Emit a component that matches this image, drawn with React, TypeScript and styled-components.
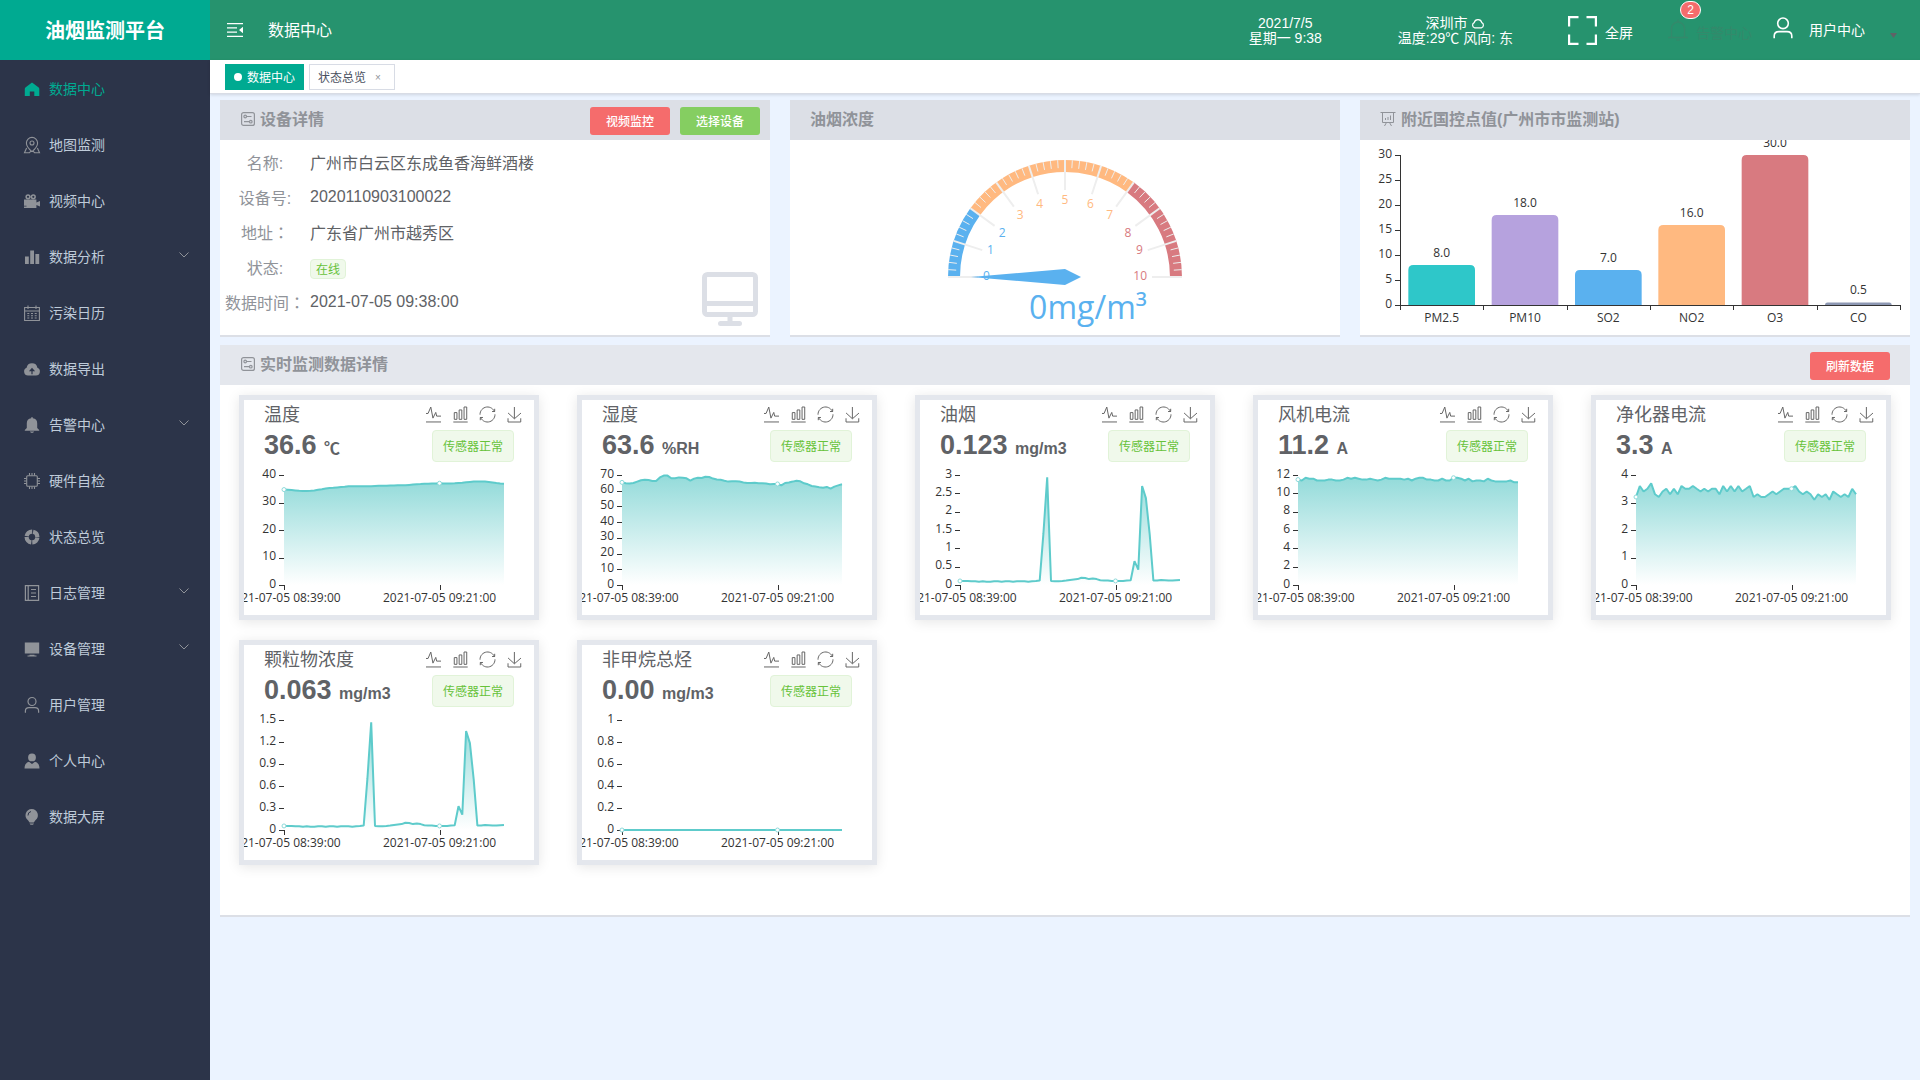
import React, { useId, useLayoutEffect, useRef, useState } from "react";
import styled, { createGlobalStyle } from "styled-components";

const GlobalStyle = createGlobalStyle`
  *, *::before, *::after { box-sizing: border-box; }
  body {
    margin: 0;
    background: #ebf3ff;
    color: #606266;
    font-family: "Liberation Sans", "Noto Sans CJK SC", sans-serif;
    font-size: 14px;
  }
  button { font-family: inherit; cursor: pointer; }
  a { color: inherit; text-decoration: none; }
  h1, h2, h3, p, dl, dd, ul { margin: 0; padding: 0; }
  ul { list-style: none; }
`;

const teal = "#00aa91";
const chartFont = '"Open Sans", "Noto Sans CJK SC", sans-serif';

/* ---------- layout ---------- */

const Shell = styled.div`
  display: flex;
  min-height: 100vh;
`;

const Sidebar = styled.aside`
  flex: 0 0 210px;
  background: #2c3449;
`;

const Brand = styled.h1`
  height: 60px;
  margin-bottom: 1px;
  padding-bottom: 1px;
  display: flex;
  align-items: center;
  justify-content: center;
  background: ${teal};
  color: #fff;
  font-size: 20px;
`;

const MenuLink = styled.a<{ $active?: boolean }>`
  height: 56px;
  padding: 0 20px;
  display: flex;
  align-items: center;
  color: ${(p) => (p.$active ? teal : "#bfcbd9")};

  > span { padding-bottom: 2px; }
  > svg:first-child {
    margin: 0 8px 0 3px;
    color: ${(p) => (p.$active ? teal : "#909399")};
  }
  > svg:last-child {
    margin: 0 1px 4px auto;
    color: #909399;
  }
`;

const Main = styled.div`
  flex: 1;
  min-width: 0;
`;

const TopBar = styled.header`
  height: 60px;
  padding: 0 23px 0 17px;
  display: flex;
  align-items: center;
  background: #26936e;
  color: #fff;
`;

const PlainButton = styled.button`
  padding: 0;
  border: 0;
  display: flex;
  align-items: center;
  background: none;
  color: inherit;
  font-size: 14px;
`;

const PageName = styled.span`
  margin: 0 auto 0 25px;
  padding-bottom: 2px;
  font-size: 16px;
`;

const Info = styled.div<{ $gap: number }>`
  margin-right: ${(p) => p.$gap}px;
  padding-top: 2px;
  line-height: 15px;
  text-align: center;
  white-space: nowrap;

  svg { vertical-align: -2px; }
`;

const FullscreenButton = styled(PlainButton)`
  margin-right: 35px;
  gap: 8px;

  span { padding-top: 4px; }
`;

const AlarmButton = styled(PlainButton)`
  position: relative;
  margin-right: 19px;
  gap: 8px;
  color: #34896b;

  > span { padding-top: 4px; }
`;

const Badge = styled.sup`
  position: absolute;
  left: 12px;
  top: -17px;
  min-width: 21px;
  height: 18px;
  border: 1px solid #fff;
  border-radius: 10px;
  background: #f56c6c;
  color: #fff;
  font-size: 12px;
  line-height: 17px;
  text-align: center;
`;

const UserButton = styled(PlainButton)`
  gap: 14px;

  > span { padding-bottom: 2px; }
  svg:first-child { margin-bottom: 4px; }
  svg:last-child { margin: 11px 0 0 11px; }
`;

const TabBar = styled.nav`
  height: 34px;
  padding: 4px 15px;
  display: flex;
  gap: 5px;
  background: #fff;
  border-bottom: 1px solid #d8dce5;
  box-shadow: 0 1px 3px rgba(0, 0, 0, 0.12);
`;

const Tab = styled.div<{ $active?: boolean }>`
  height: 26px;
  padding: 0 8px;
  display: flex;
  align-items: center;
  border: 1px solid ${(p) => (p.$active ? teal : "#d8dce5")};
  background: ${(p) => (p.$active ? teal : "#fff")};
  color: ${(p) => (p.$active ? "#fff" : "#495060")};
  font-size: 12px;

  a { padding-bottom: 1px; }
`;

const TabDot = styled.i`
  width: 8px;
  height: 8px;
  margin-right: 5px;
  border-radius: 50%;
  background: #fff;
`;

const TabClose = styled.button`
  width: 16px;
  margin-left: 4px;
  padding: 0;
  border: 0;
  background: none;
  color: #909399;
  font-size: 10px;
`;

const Content = styled.main`
  padding: 6px 10px;
  display: grid;
  gap: 8px;
`;

const TopRow = styled.div`
  display: grid;
  grid-template-columns: repeat(3, minmax(0, 1fr));
  gap: 20px;
`;

const Panel = styled.section`
  background: #fff;
  border-bottom: 2px solid #dcdfe6;
`;

const PanelHead = styled.header<{ $light?: boolean; $end?: number }>`
  height: 40px;
  padding: 0 ${(p) => p.$end ?? 20}px 0 20px;
  display: flex;
  align-items: center;
  gap: 10px;
  background: ${(p) => (p.$light ? "#e4e7ed" : "#dcdfe6")};
`;

const PanelTitle = styled.h2`
  margin-right: auto;
  padding-bottom: 5px;
  display: flex;
  align-items: center;
  gap: 4px;
  color: #909399;
  font-size: 16px;

  svg { margin-top: 2px; }
`;

const SmallButton = styled.button<{ $tone: "danger" | "success" }>`
  width: 80px;
  height: 28px;
  margin-top: 2px;
  padding: 0 0 2px;
  border: 0;
  border-radius: 3px;
  background: ${(p) => (p.$tone === "danger" ? "#f56c6c" : "#85ce61")};
  color: #fff;
  font-size: 12px;
  font-weight: 500;
`;

const PanelBody = styled.div`
  height: 195px;
`;

const DeviceBody = styled(PanelBody)`
  display: flex;
  align-items: flex-end;
  justify-content: space-between;
  padding: 0 12px 8px 5px;
`;

const DeviceList = styled.dl`
  align-self: flex-start;
  padding-top: 4px;
  display: grid;
  grid-template-columns: 80px auto;
  column-gap: 5px;
  grid-auto-rows: 35px;
  align-items: center;
  font-size: 16px;
  white-space: nowrap;

  dt {
    color: #909399;
    text-align: center;
  }
`;

const WideColon = styled.span`
  font-family: "Noto Sans CJK TC", sans-serif;
  line-height: 1;
`;

const Tag = styled.span<{ $large?: boolean }>`
  height: ${(p) => (p.$large ? 32 : 20)}px;
  padding: 0 ${(p) => (p.$large ? 10 : 5)}px 2px;
  display: inline-flex;
  align-items: center;
  vertical-align: -6px;
  border: 1px solid #e1f3d8;
  border-radius: 4px;
  background: #f0f9eb;
  color: #67c23a;
  font-size: 12px;
  white-space: nowrap;
`;

const GaugeBody = styled(PanelBody)`
  display: flex;
  justify-content: center;
`;

const SensorGrid = styled.div`
  padding: 10px 19px 50px;
  display: grid;
  grid-template-columns: repeat(5, minmax(0, 1fr));
  gap: 20px 38px;
`;

const SensorCard = styled.article`
  border: 5px solid #e4e7ed;
  background: #fff;
  box-shadow: 0 2px 12px rgba(0, 0, 0, 0.1);
  overflow: hidden;
`;

const SensorHead = styled.div`
  height: 30px;
  padding: 0 12px 4px 20px;
  display: flex;
  align-items: center;
  justify-content: space-between;

  h3 {
    font-size: 18px;
    font-weight: 400;
    white-space: nowrap;
  }
`;

const Tools = styled.div`
  padding-top: 2px;
  display: flex;
  gap: 12px;
  color: #666;
`;

const SensorValue = styled.div`
  height: 32px;
  padding: 0 20px;
  display: flex;
  align-items: center;
  justify-content: space-between;
`;

const Reading = styled.p`
  padding-top: 2px;
  font-size: 27px;
  font-weight: 700;
  line-height: 32px;
  white-space: nowrap;

  small { font-size: 16px; }
`;

const ChartBox = styled.div<{ $height: number }>`
  height: ${(p) => p.$height}px;
  overflow: hidden;

  svg { display: block; }
`;

const ChartText = styled.text`
  font-family: ${chartFont};
  font-size: 12px;
  fill: #333;
  dominant-baseline: central;
`;

const GaugeValue = styled(ChartText)`
  font-size: 32px;
  fill: #5ab1ef;
  text-anchor: middle;
`;

/* ---------- icons ---------- */

const iconShapes: Record<string, React.ReactNode> = {
  home: <path fill="currentColor" d="M9 2.4 15.7 7.4Q16.3 8 16.3 8.8V16H11.3V11.6H6.8V16H1.8V8.8Q1.8 8 2.4 7.4Z" />,
  map: (
    <g fill="none" stroke="currentColor" strokeWidth="1.1">
      <path d="M9 15.6Q3.4 11 3.4 7A5.6 5.6 0 0 1 14.6 7Q14.6 11 9 15.6ZM3.6 12 1.5 16.7H6.5L8 15M14.4 12 16.5 16.7H11.5L10 15" />
      <circle cx="9" cy="7" r="2" />
    </g>
  ),
  camera: (
    <g fill="currentColor">
      <path fillRule="evenodd" d="M5 2.2A2.6 2.6 0 1 1 5 7.4 2.6 2.6 0 0 1 5 2.2ZM5 3.7A1.1 1.1 0 1 0 5 5.9 1.1 1.1 0 0 0 5 3.7ZM10.3 2.2A2.6 2.6 0 1 1 10.3 7.4 2.6 2.6 0 0 1 10.3 2.2ZM10.3 3.7A1.1 1.1 0 1 0 10.3 5.9 1.1 1.1 0 0 0 10.3 3.7Z" />
      <path d="M1 7.5H13.4V10.5L17 9V14.5L13.4 13V16H1V14.5H3.5V13.8H1Z" />
    </g>
  ),
  data: <path fill="currentColor" d="M2 8.5H5.8V16H2ZM7.2 2.5H11V16H7.2ZM12.4 6H16.2V16H12.4Z" />,
  date: (
    <g fill="none" stroke="currentColor" strokeWidth="1.1">
      <path d="M1.6 3.5H16.4V16.5H1.6ZM1.6 7H16.4M5 1.5V5M13 1.5V5" />
      <path strokeDasharray="2 1.7" d="M4.3 9.5H14M4.3 11.7H14M4.3 14H14" />
    </g>
  ),
  upload: (
    <path
      fill="currentColor"
      fillRule="evenodd"
      d="M5 15.5A4 4 0 0 1 3.6 7.8 5.5 5.5 0 0 1 14.4 7.8 4 4 0 0 1 13 15.5ZM9 7.8 5.9 11.3H8.4V14.2H9.6V11.3H12.1Z"
    />
  ),
  bell: (
    <path
      fill="currentColor"
      d="M8.2 1.2H9.8V2.2A5.2 5.2 0 0 1 14.2 7.3V12L16.2 14V14.8H1.8V14L3.8 12V7.3A5.2 5.2 0 0 1 8.2 2.2ZM6.8 15.6H11.2Q10.6 17 9 17 7.4 17 6.8 15.6Z"
    />
  ),
  cpu: (
    <g fill="none" stroke="currentColor" strokeWidth="1.1">
      <rect x="3.7" y="3.7" width="10.6" height="10.6" rx="1" />
      <path d="M6.5 3.5V1M9 3.5V1M11.5 3.5V1M6.5 17V14.5M9 17V14.5M11.5 17V14.5M1 6.5H3.5M1 9H3.5M1 11.5H3.5M14.5 6.5H17M14.5 9H17M14.5 11.5H17" />
    </g>
  ),
  help: (
    <circle cx="9" cy="9" r="5.4" fill="none" stroke="currentColor" strokeWidth="4.2" strokeDasharray="7.48 1" strokeDashoffset="-0.5" />
  ),
  notebook: (
    <path fill="none" stroke="currentColor" strokeWidth="1.2" d="M2.4 1.6H15.6V16.4H2.4ZM5.2 1.6V16.4M8 5.5H13M8 9H13M8 12.5H13" />
  ),
  platform: <path fill="currentColor" d="M1.8 2.5H16.2V13.5H1.8ZM6.5 14.7H11.5V15.4H13.5V16.4H4.5V15.4H6.5Z" />,
  user: (
    <g fill="none" stroke="currentColor" strokeWidth="1.2">
      <circle cx="9" cy="5.5" r="4" />
      <path d="M2.4 16.7V15Q2.4 11.7 6 11.7H12Q15.6 11.7 15.6 15V16.7" />
    </g>
  ),
  person: (
    <path fill="currentColor" d="M9 1.5A3.9 3.9 0 1 1 9 9.3 3.9 3.9 0 0 1 9 1.5ZM6 9.8 9 12 12 9.8Q16.5 11 16.5 16.5H1.5Q1.5 11 6 9.8Z" />
  ),
  bulb: (
    <g>
      <path fill="currentColor" d="M8.7 1A6.3 6.3 0 0 1 12.4 12.3L10.8 14.5H6.6L5 12.3A6.3 6.3 0 0 1 8.7 1ZM6.5 15.5H11L10 16.8H7.5Z" />
      <path d="M5 7.5A3.9 3.9 0 0 1 8 3.5" fill="none" stroke="#2c3449" />
    </g>
  ),
};

const Icon = ({ name, size = 18 }: { name: string; size?: number }) => (
  <svg width={size} height={size} viewBox="0 0 18 18" aria-hidden="true">
    {iconShapes[name]}
  </svg>
);

const Chevron = () => (
  <svg width="10" height="6" viewBox="0 0 10 6" fill="none" stroke="currentColor" aria-hidden="true">
    <path d="M.5.5 5 5 9.5.5" />
  </svg>
);

const FoldIcon = () => (
  <svg width="16" height="16" viewBox="0 0 16 16" fill="currentColor" aria-hidden="true">
    <path d="M0 1H16V2.3H0ZM0 5.3H10V6.6H0ZM0 9.5H10V10.8H0ZM0 13.7H16V15H0ZM16 4.8V11.2L12 8Z" />
  </svg>
);

const CloudIcon = () => (
  <svg width="14" height="13" viewBox="0 0 14 13" fill="none" stroke="currentColor" strokeWidth="1.2" aria-hidden="true">
    <path d="M3.5 10.8A2.8 2.8 0 0 1 3.2 5.6 3.9 3.9 0 0 1 10.8 5.6 2.8 2.8 0 0 1 10.5 10.8Z" />
  </svg>
);

const FullscreenIcon = () => (
  <svg width="29" height="29" viewBox="0 0 29 29" fill="none" stroke="currentColor" strokeWidth="2.2" aria-hidden="true">
    <path d="M1.1 10.5V1.1H10.5M18.5 1.1H27.9V10.5M27.9 18.5V27.9H18.5M10.5 27.9H1.1V18.5" />
  </svg>
);

const BellOutline = () => (
  <svg width="20" height="22" viewBox="0 0 20 22" fill="none" stroke="currentColor" strokeWidth="1.4" aria-hidden="true">
    <path d="M3.5 18V9.500A6.500 6.500 0 0 1 16.500 9.500V18M0 18.500H20M10 3V.5M8.500 21H11.500" />
  </svg>
);

const ListIcon = () => (
  <svg width="16" height="16" viewBox="0 0 16 16" fill="none" stroke="currentColor" strokeWidth="1.2" aria-hidden="true">
    <rect x="1.6" y="1.6" width="12.8" height="12.8" rx="2" />
    <circle cx="5.2" cy="5.5" r="1.3" />
    <circle cx="10.8" cy="10.7" r="1.3" />
    <path d="M6.5 5.5H11.500M4 10.7H9.5" />
  </svg>
);

const BoardIcon = () => (
  <svg width="17" height="16" viewBox="0 0 17 16" fill="none" stroke="currentColor" aria-hidden="true">
    <path d="M.5 1.5H15.5M2.5 1.5V11.5H13.5V1.5M6.5 11.5 4.5 15M9.5 11.5 11.5 15M5.5 9V7M8 9V6M10.5 9V4.5" />
  </svg>
);

const MonitorIcon = () => (
  <svg width="56" height="55" viewBox="0 0 56 55" fill="none" stroke="#dcdfe6" strokeWidth="5" aria-hidden="true">
    <rect x="2.5" y="2.5" width="51" height="40" rx="3" />
    <path d="M3 31.5H53M28 43V52" />
    <path d="M18.5 51.5H37.5" strokeLinecap="round" />
  </svg>
);

const toolShapes = [
  { label: "折线图", box: "4.1 6.9 51.4 51.1", d: "M4.1,28.9h7.1l9.3-22l7.4,38l9.7-19.7l3,12.8h14.9M4.1,58h51.4" },
  { label: "柱状图", box: "3.1 2 53.7 56", d: "M6.7,22.9h10V48h-10V22.9zM24.9,13h10v35h-10V13zM43.2,2h10v46h-10V2zM3.1,58h53.7" },
  {
    label: "还原",
    box: "2.1 2 55.8 56",
    d: "M47,18.9h9.8V8.7M56.3,20.1C52.1,9,40.5,0.6,26.8,2.1C12.6,3.7,1.6,16.2,2.1,30.6M13,41.1H3.1v10.2M3.7,39.9c4.2,11.1,15.8,19.5,29.5,18c14.2-1.6,25.2-14.1,24.7-28.5",
  },
  { label: "保存图片", box: "4.6 0 50.1 58", d: "M4.7,22.9L29.3,45.5L54.7,23.4M4.6,43.6L4.6,58L53.8,58L53.8,43.6M29.2,45.1L29.2,0" },
];

const ToolIcon = styled.svg`
  width: 15px;
  height: 15px;
  overflow: visible;
  fill: none;
  stroke: currentColor;

  path { vector-effect: non-scaling-stroke; }
`;

/* ---------- charts ---------- */

function useWidth(initial: number) {
  const ref = useRef<HTMLDivElement>(null);
  const [width, setWidth] = useState(initial);
  useLayoutEffect(() => {
    const node = ref.current;
    if (!node) return;
    const measure = () => setWidth(node.clientWidth);
    measure();
    const observer = new ResizeObserver(measure);
    observer.observe(node);
    return () => observer.disconnect();
  }, []);
  return [ref, width] as const;
}

const pollutants = [
  { name: "PM2.5", value: 8, color: "#2ec7c9" },
  { name: "PM10", value: 18, color: "#b6a2de" },
  { name: "SO2", value: 7, color: "#5ab1ef" },
  { name: "NO2", value: 16, color: "#ffb980" },
  { name: "O3", value: 30, color: "#d87a80" },
  { name: "CO", value: 0.5, color: "#8d98b3" },
];

function BarChart() {
  const [ref, width] = useWidth(550);
  const left = 40;
  const base = 165;
  const band = (width - left - 10) / pollutants.length;
  const barWidth = band * 0.8;
  return (
    <ChartBox ref={ref} $height={195}>
      <svg width={width} height="195" role="img" aria-label="附近国控点值">
        {pollutants.map((p, i) => {
          const x = left + band * i + band * 0.1;
          const h = p.value * 5;
          const r = Math.min(5, h);
          const mid = left + band * (i + 0.5);
          return (
            <g key={p.name}>
              <path
                fill={p.color}
                d={`M${x} ${base}v${-(h - r)}q0 ${-r} ${r} ${-r}h${barWidth - 2 * r}q${r} 0 ${r} ${r}v${h - r}z`}
              />
              <ChartText x={mid} y={base - h - 13} textAnchor="middle">{p.value.toFixed(1)}</ChartText>
              <ChartText x={mid} y={177} textAnchor="middle">{p.name}</ChartText>
            </g>
          );
        })}
        <g stroke="#333" shapeRendering="crispEdges">
          <path d={`M${left + 0.5} 15V${base + 0.5}H${width - 9.5}`} fill="none" />
          {pollutants.map((p, i) => (
            <path key={p.name} d={`M${left + band * (i + 1) + 0.5} ${base}v5`} />
          ))}
          <path d={`M${left + 0.5} ${base}v5`} />
          {[0, 5, 10, 15, 20, 25, 30].map((v) => (
            <path key={v} d={`M${left - 5} ${base - v * 5 + 0.5}h5`} />
          ))}
        </g>
        {[0, 5, 10, 15, 20, 25, 30].map((v) => (
          <ChartText key={v} x={left - 8} y={base - v * 5 - 2} textAnchor="end">{v}</ChartText>
        ))}
      </svg>
    </ChartBox>
  );
}

const polar = (r: number, t: number) => [-r * Math.cos(Math.PI * t), -r * Math.sin(Math.PI * t)] as const;

function ring(from: number, to: number) {
  const [x1, y1] = polar(111, from);
  const [x2, y2] = polar(111, to);
  return `M${x1} ${y1}A111 111 0 0 1 ${x2} ${y2}`;
}

const zoneColor = (v: number) => (v <= 2 ? "#5ab1ef" : v <= 7 ? "#ffb980" : "#d87a80");

function Gauge() {
  const ticks = Array.from({ length: 51 }, (_, i) => i);
  return (
    <svg width="300" height="195" viewBox="-150 -137 300 195" role="img" aria-label="油烟浓度">
      <g fill="none" strokeWidth="12">
        <path d={ring(0, 0.2)} stroke="#5ab1ef" />
        <path d={ring(0.2, 0.7)} stroke="#ffb980" />
        <path d={ring(0.7, 1)} stroke="#d87a80" />
      </g>
      {ticks.map((i) => {
        const major = i % 5 === 0;
        const [x1, y1] = polar(117, i / 50);
        const [x2, y2] = polar(major ? 87 : 109, i / 50);
        return <line key={i} x1={x1} y1={y1} x2={x2} y2={y2} stroke="#eee" strokeWidth={major ? 2 : 1} />;
      })}
      {ticks.slice(0, 11).map((v) => {
        const [x, y] = polar(82, v / 10);
        const anchor = x < -32 ? "start" : x > 32 ? "end" : "middle";
        return (
          <ChartText key={v} x={x} y={y < -32 ? y + 4 : y - 2} textAnchor={anchor} style={{ fill: zoneColor(v) }}>
            {v}
          </ChartText>
        );
      })}
      <path d="M-94 0 0-8 16 0 0 8Z" fill="#5ab1ef" />
      <GaugeValue x="23" y="29">0mg/m³</GaugeValue>
    </svg>
  );
}

function TrendChart({ data, max, step }: { data: number[]; max: number; step: number }) {
  const [ref, width] = useWidth(290);
  const fillId = useId();
  const left = 40;
  const base = 123;
  const px = (i: number) => left + ((width - left - 30) * i) / (data.length - 1);
  const py = (v: number) => base - (v / max) * 110;
  const line = data.map((v, i) => `${i ? "L" : "M"}${px(i).toFixed(1)} ${py(v).toFixed(1)}`).join("");
  const marks = [
    { i: 0, label: "2021-07-05 08:39:00" },
    { i: 41, label: "2021-07-05 09:21:00" },
  ];
  const scale = Array.from({ length: Math.round(max / step) + 1 }, (_, i) => +(i * step).toFixed(1));
  return (
    <ChartBox ref={ref} $height={153}>
      <svg width={width} height="153" role="img" aria-label="监测曲线">
        <defs>
          <linearGradient id={fillId} x1="0" y1="0" x2="0" y2="1">
            <stop offset="0" stopColor="#94dbda" />
            <stop offset="1" stopColor="#fff" />
          </linearGradient>
        </defs>
        <path d={`${line}V${base}H${left}Z`} fill={`url(#${fillId})`} />
        <g stroke="#333" shapeRendering="crispEdges">
          {scale.map((v) => (
            <path key={v} d={`M${left - 5} ${Math.round(py(v)) + 0.5}h5`} />
          ))}
          {marks.map((m) => (
            <path key={m.i} d={`M${Math.round(px(m.i)) + 0.5} ${base}v5`} />
          ))}
        </g>
        {scale.map((v) => (
          <ChartText key={v} x={left - 8} y={py(v) - 2} textAnchor="end">{v}</ChartText>
        ))}
        {marks.map((m) => (
          <ChartText key={m.i} x={px(m.i)} y={135} textAnchor="middle">{m.label}</ChartText>
        ))}
        <path d={line} fill="none" stroke="#5ecbcb" strokeWidth="2" strokeLinejoin="bevel" />
        {marks.map((m) => (
          <circle key={m.i} cx={px(m.i)} cy={py(data[m.i])} r="2" fill="#fff" stroke="#8edada" />
        ))}
      </svg>
    </ChartBox>
  );
}

/* ---------- data ---------- */

const temperature = [
  34.7, 34.6, 34.5, 34.4, 34.3, 34.2, 34.2, 34.3, 34.4, 34.6, 34.8, 35.1, 35.3, 35.4, 35.5, 35.6, 35.7, 35.9, 35.9, 35.9,
  35.9, 35.9, 35.9, 35.9, 36, 36.1, 36.1, 36.1, 36.2, 36.2, 36.3, 36.3, 36.3, 36.4, 36.5, 36.6, 36.7, 36.8, 36.8, 36.9,
  36.9, 37, 36.9, 36.9, 36.9, 37, 37.1, 37.2, 37.4, 37.5, 37.6, 37.6, 37.6, 37.6, 37.5, 37.3, 37.1, 36.9, 36.8,
];
const humidity = [
  65.3, 64.7, 64.5, 64.9, 65.8, 66.6, 67, 66.8, 66.2, 66.2, 68.5, 69.6, 69.6, 67.9, 67.9, 68.5, 68.3, 67.9, 66.4, 67.7,
  68.3, 68.1, 68.9, 68.7, 67.7, 67.2, 67, 66.4, 65.8, 66, 66, 65.8, 65.3, 64.9, 64.9, 65.1, 64.7, 64.7, 64.5, 64.1,
  64.3, 64.3, 63.4, 64.9, 65.3, 65.8, 66.4, 66, 64.7, 64.1, 63, 62.6, 62.2, 61.9, 62.4, 61.3, 62.6, 63.4, 64.1,
];
const fume = [
  0.11, 0.11, 0.11, 0.1, 0.1, 0.09, 0.1, 0.09, 0.09, 0.1, 0.1, 0.09, 0.1, 0.1, 0.09, 0.1, 0.1, 0.1, 0.09, 0.1,
  0.11, 0.12, 1.4, 2.94, 0.11, 0.1, 0.1, 0.11, 0.12, 0.14, 0.15, 0.16, 0.2, 0.19, 0.16, 0.18, 0.16, 0.13, 0.12, 0.12,
  0.11, 0.11, 0.11, 0.11, 0.12, 0.13, 0.65, 0.42, 2.7, 2.37, 1.38, 0.12, 0.12, 0.14, 0.13, 0.12, 0.12, 0.13, 0.14,
];
const fanCurrent = [
  11.5, 11.4, 11.7, 11.6, 11.6, 11.4, 11.4, 11.4, 11.5, 11.5, 11.4, 11.4, 11.5, 11.7, 11.6, 11.7, 11.6, 11.5, 11.5, 11.6,
  11.5, 11.4, 11.5, 11.7, 11.6, 11.6, 11.6, 11.6, 11.5, 11.6, 11.4, 11.6, 11.7, 11.7, 11.5, 11.5, 11.4, 11.4, 11.6, 11.4,
  11.4, 11.7, 11.7, 11.6, 11.4, 11.6, 11.3, 11.4, 11.4, 11.3, 11.6, 11.4, 11.3, 11.3, 11.3, 11.3, 11.4, 11.2, 11.2,
];
const purifierCurrent = [
  3.2, 3.6, 3.4, 3.5, 3.7, 3.3, 3.2, 3.4, 3.5, 3.3, 3.5, 3.3, 3.6, 3.5, 3.5, 3.6, 3.5, 3.4, 3.5, 3.4,
  3.5, 3.5, 3.3, 3.6, 3.4, 3.6, 3.4, 3.6, 3.4, 3.5, 3.6, 3.2, 3.3, 3.2, 3.2, 3.3, 3.4, 3.3, 3.4, 3.5,
  3.5, 3.5, 3.6, 3.4, 3.3, 3.4, 3.3, 3.1, 3.3, 3.2, 3.3, 3.1, 3.4, 3.3, 3.2, 3.3, 3.2, 3.5, 3.3,
];

const sensors = [
  { name: "温度", value: "36.6", unit: "℃", data: temperature, max: 40, step: 10 },
  { name: "湿度", value: "63.6", unit: "%RH", data: humidity, max: 70, step: 10 },
  { name: "油烟", value: "0.123", unit: "mg/m3", data: fume, max: 3, step: 0.5 },
  { name: "风机电流", value: "11.2", unit: "A", data: fanCurrent, max: 12, step: 2 },
  { name: "净化器电流", value: "3.3", unit: "A", data: purifierCurrent, max: 4, step: 1 },
  { name: "颗粒物浓度", value: "0.063", unit: "mg/m3", data: fume.map((v) => v / 2), max: 1.5, step: 0.3 },
  { name: "非甲烷总烃", value: "0.00", unit: "mg/m3", data: fume.map(() => 0), max: 1, step: 0.2 },
];

const menu = [
  { icon: "home", text: "数据中心" },
  { icon: "map", text: "地图监测" },
  { icon: "camera", text: "视频中心" },
  { icon: "data", text: "数据分析", group: true },
  { icon: "date", text: "污染日历" },
  { icon: "upload", text: "数据导出" },
  { icon: "bell", text: "告警中心", group: true },
  { icon: "cpu", text: "硬件自检" },
  { icon: "help", text: "状态总览" },
  { icon: "notebook", text: "日志管理", group: true },
  { icon: "platform", text: "设备管理", group: true },
  { icon: "user", text: "用户管理" },
  { icon: "person", text: "个人中心" },
  { icon: "bulb", text: "数据大屏" },
];

/* ---------- page ---------- */

export default function App() {
  return (
    <Shell>
      <GlobalStyle />
      <Sidebar>
        <Brand>油烟监测平台</Brand>
        <nav>
          <ul>
            {menu.map((item, i) => (
              <li key={item.text}>
                <MenuLink href="#" $active={i === 0}>
                  <Icon name={item.icon} />
                  <span>{item.text}</span>
                  {item.group && <Chevron />}
                </MenuLink>
              </li>
            ))}
          </ul>
        </nav>
      </Sidebar>
      <Main>
        <TopBar>
          <PlainButton aria-label="折叠菜单"><FoldIcon /></PlainButton>
          <PageName>数据中心</PageName>
          <Info $gap={76}>
            <div>2021/7/5</div>
            <div>星期一 9:38</div>
          </Info>
          <Info $gap={55}>
            <div>深圳市 <CloudIcon /></div>
            <div>温度:29℃ 风向: 东</div>
          </Info>
          <FullscreenButton>
            <FullscreenIcon />
            <span>全屏</span>
          </FullscreenButton>
          <AlarmButton>
            <BellOutline />
            <span>告警中心</span>
            <Badge>2</Badge>
          </AlarmButton>
          <UserButton>
            <Icon name="user" size={24} />
            <span>用户中心</span>
            <svg width="7" height="5" viewBox="0 0 7 5" aria-hidden="true"><path d="M0 0H7L3.5 5Z" fill="#606266" /></svg>
          </UserButton>
        </TopBar>
        <TabBar>
          <Tab $active><TabDot /><a href="#">数据中心</a></Tab>
          <Tab>
            <a href="#">状态总览</a>
            <TabClose aria-label="关闭">×</TabClose>
          </Tab>
        </TabBar>
        <Content>
          <TopRow>
            <Panel>
              <PanelHead $end={10}>
                <PanelTitle><ListIcon />设备详情</PanelTitle>
                <SmallButton $tone="danger">视频监控</SmallButton>
                <SmallButton $tone="success">选择设备</SmallButton>
              </PanelHead>
              <DeviceBody>
                <DeviceList>
                  <dt>名称:</dt>
                  <dd>广州市白云区东成鱼香海鲜酒楼</dd>
                  <dt>设备号:</dt>
                  <dd>2020110903100022</dd>
                  <dt>地址<WideColon>：</WideColon></dt>
                  <dd>广东省广州市越秀区</dd>
                  <dt>状态:</dt>
                  <dd><Tag>在线</Tag></dd>
                  <dt>数据时间<WideColon>：</WideColon></dt>
                  <dd>2021-07-05 09:38:00</dd>
                </DeviceList>
                <MonitorIcon />
              </DeviceBody>
            </Panel>
            <Panel>
              <PanelHead><PanelTitle>油烟浓度</PanelTitle></PanelHead>
              <GaugeBody><Gauge /></GaugeBody>
            </Panel>
            <Panel>
              <PanelHead>
                <PanelTitle><BoardIcon />附近国控点值(广州市市监测站)</PanelTitle>
              </PanelHead>
              <BarChart />
            </Panel>
          </TopRow>
          <Panel>
            <PanelHead $light>
              <PanelTitle><ListIcon />实时监测数据详情</PanelTitle>
              <SmallButton $tone="danger">刷新数据</SmallButton>
            </PanelHead>
            <SensorGrid>
              {sensors.map((s) => (
                <SensorCard key={s.name}>
                  <SensorHead>
                    <h3>{s.name}</h3>
                    <Tools>
                      {toolShapes.map((t) => (
                        <PlainButton key={t.label} aria-label={t.label}>
                          <ToolIcon viewBox={t.box}><path d={t.d} /></ToolIcon>
                        </PlainButton>
                      ))}
                    </Tools>
                  </SensorHead>
                  <SensorValue>
                    <Reading>{s.value} <small>{s.unit}</small></Reading>
                    <Tag $large>传感器正常</Tag>
                  </SensorValue>
                  <TrendChart data={s.data} max={s.max} step={s.step} />
                </SensorCard>
              ))}
            </SensorGrid>
          </Panel>
        </Content>
      </Main>
    </Shell>
  );
}
